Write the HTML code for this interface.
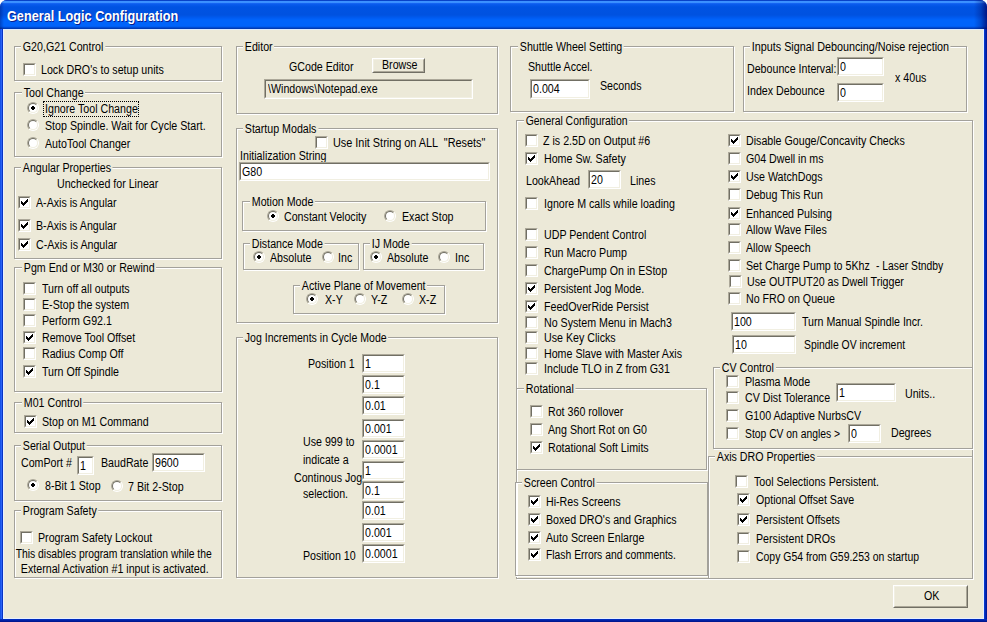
<!DOCTYPE html>
<html><head><meta charset="utf-8"><style>
html,body{margin:0;padding:0;width:987px;height:622px;overflow:hidden;background:#fff;}
#win{position:absolute;left:0;top:0;width:987px;height:622px;background:#0A3FD8;border-radius:7px 7px 0 0;overflow:hidden;}
#title{position:absolute;left:0;top:0;width:987px;height:29px;
background:linear-gradient(to bottom,#0842C8 0px,#0842C8 1px,#3D93FF 1px,#3A8EFF 3px,#1E6CF6 3px,#0A5CEE 4px,#0053E2 7px,#0052E0 15px,#005CF2 18px,#0064FB 20px,#0064FB 26px,#0058EA 27px,#0040BC 28px,#0034A8 29px);}
#ttxt{position:absolute;left:7px;top:8px;font-family:"Liberation Sans",sans-serif;font-weight:bold;font-size:14.5px;line-height:16px;color:#fff;text-shadow:1px 1px 0 #0A1E8C;white-space:nowrap;transform:scaleX(0.875);transform-origin:left top;}
#title::after{content:"";position:absolute;left:0;top:0;right:0;bottom:0;background:linear-gradient(to right,rgba(0,10,90,0.35) 0px,rgba(0,10,90,0) 4px,rgba(0,10,90,0) 974px,rgba(0,10,100,0.3) 981px,rgba(0,0,100,0.75) 987px);}
#lframe{position:absolute;left:0;top:29px;width:3px;height:593px;background:linear-gradient(to right,#1652E8 0px,#1652E8 1px,#2A62F4 1px,#2A62F4 2px,#0834C4 2px,#0834C4 3px);}
#rframe{position:absolute;left:984px;top:29px;width:3px;height:593px;background:linear-gradient(to right,#0840D8,#0020A8 2px,#001090 3px);}
#bframe{position:absolute;left:0;top:619px;width:987px;height:3px;background:linear-gradient(to bottom,#0030C8,#001C98 2px,#001488 3px);}
#client{position:absolute;left:3px;top:29px;width:979px;height:588px;background:#ECE9D8;border:1px solid #E8F0FF;border-top-color:#DCEBFF;}
.t{position:absolute;font-family:"Liberation Sans",sans-serif;font-size:12px;line-height:14px;color:#000;white-space:pre;transform:scaleX(0.888);transform-origin:left top;}
.t.a{transform:none;}
.t.a span{display:inline-block;transform:scaleX(0.888);}
.gl{background:#ECE9D8;padding:0 2px;}
.g{position:absolute;border:1px solid #A3A19B;box-shadow:inset 1px 1px 0 #fff,1px 1px 0 #fff;}
.cb{position:absolute;width:11px;height:11px;border:1px solid;border-color:#ACA899 #fff #fff #ACA899;}
.cbi{position:relative;width:9px;height:9px;border:1px solid;border-color:#716F64 #F1EFE2 #F1EFE2 #716F64;background:#fff;}
.rb{position:absolute;width:10px;height:10px;border:1px solid;border-color:#ACA899 #fff #fff #ACA899;border-radius:50%;}
.rbi{position:relative;width:8px;height:8px;border:1px solid;border-color:#716F64 #F1EFE2 #F1EFE2 #716F64;border-radius:50%;background:#fff;}
.dot{position:absolute;left:2px;top:2px;}
.tb{position:absolute;border:1px solid;border-color:#ACA899 #fff #fff #ACA899;background:#fff;}
.tbi{position:absolute;left:0;top:0;right:0;bottom:0;border:1px solid;border-color:#716F64 #F1EFE2 #F1EFE2 #716F64;}
.tb.dis{background:#ECE9D8;}
.btn{position:absolute;border:1px solid;border-color:#fff #716F64 #716F64 #fff;background:#ECE9D8;}
.btni{position:absolute;left:0;top:0;right:0;bottom:0;border:1px solid;border-color:#F1EFE2 #ACA899 #ACA899 #F1EFE2;}
.focus{position:absolute;border:1px dotted #000;}
</style></head><body>
<div id="win">
<div id="title"><div id="ttxt">General Logic Configuration</div></div>
<div id="lframe"></div><div id="rframe"></div><div id="bframe"></div>
<div id="client"></div>
<div class="g" style="left:14px;top:46px;width:206px;height:33px"></div>
<div class="t gl" style="left:21px;top:40px">G20,G21 Control</div>
<div class="cb" style="left:23px;top:63px"><div class="cbi"></div></div>
<div class="t" style="left:41px;top:63px">Lock DRO&#x27;s to setup units</div>
<div class="g" style="left:14px;top:92px;width:206px;height:63px"></div>
<div class="t gl" style="left:22px;top:86px">Tool Change</div>
<div class="rb" style="left:27px;top:102px"><div class="rbi"><svg class="dot" width="4" height="4" shape-rendering="crispEdges"><path d="M1 0h2v4h-2zM0 1h4v2h-4z" fill="#000"/></svg></div></div>
<div class="t" style="left:45px;top:102px">Ignore Tool Change</div>
<div class="focus" style="left:43px;top:101px;width:94px;height:14px"></div>
<div class="rb" style="left:27px;top:119px"><div class="rbi"></div></div>
<div class="t" style="left:45px;top:119px">Stop Spindle. Wait for Cycle Start.</div>
<div class="rb" style="left:27px;top:137px"><div class="rbi"></div></div>
<div class="t" style="left:45px;top:137px">AutoTool Changer</div>
<div class="g" style="left:14px;top:167px;width:206px;height:90px"></div>
<div class="t gl" style="left:21px;top:161px">Angular Properties</div>
<div class="t" style="left:57px;top:177px">Unchecked for Linear</div>
<div class="cb" style="left:18px;top:196px"><div class="cbi"><svg width="7" height="7" style="position:absolute;left:1px;top:1px" shape-rendering="crispEdges"><path d="M6 0h1v3h-1zM5 1h1v3h-1zM4 2h1v3h-1zM3 3h1v3h-1zM2 4h1v3h-1zM1 3h1v3h-1zM0 2h1v3h-1z" fill="#000"/></svg></div></div>
<div class="t" style="left:36px;top:196px">A-Axis is Angular</div>
<div class="cb" style="left:18px;top:219px"><div class="cbi"><svg width="7" height="7" style="position:absolute;left:1px;top:1px" shape-rendering="crispEdges"><path d="M6 0h1v3h-1zM5 1h1v3h-1zM4 2h1v3h-1zM3 3h1v3h-1zM2 4h1v3h-1zM1 3h1v3h-1zM0 2h1v3h-1z" fill="#000"/></svg></div></div>
<div class="t" style="left:36px;top:219px">B-Axis is Angular</div>
<div class="cb" style="left:18px;top:238px"><div class="cbi"><svg width="7" height="7" style="position:absolute;left:1px;top:1px" shape-rendering="crispEdges"><path d="M6 0h1v3h-1zM5 1h1v3h-1zM4 2h1v3h-1zM3 3h1v3h-1zM2 4h1v3h-1zM1 3h1v3h-1zM0 2h1v3h-1z" fill="#000"/></svg></div></div>
<div class="t" style="left:36px;top:238px">C-Axis is Angular</div>
<div class="g" style="left:14px;top:267px;width:206px;height:123px"></div>
<div class="t gl" style="left:22px;top:261px">Pgm End or M30 or Rewind</div>
<div class="cb" style="left:23px;top:282px"><div class="cbi"></div></div>
<div class="t" style="left:42px;top:282px">Turn off all outputs</div>
<div class="cb" style="left:23px;top:298px"><div class="cbi"></div></div>
<div class="t" style="left:42px;top:298px">E-Stop the system</div>
<div class="cb" style="left:23px;top:314px"><div class="cbi"></div></div>
<div class="t" style="left:42px;top:314px">Perform G92.1</div>
<div class="cb" style="left:23px;top:331px"><div class="cbi"><svg width="7" height="7" style="position:absolute;left:1px;top:1px" shape-rendering="crispEdges"><path d="M6 0h1v3h-1zM5 1h1v3h-1zM4 2h1v3h-1zM3 3h1v3h-1zM2 4h1v3h-1zM1 3h1v3h-1zM0 2h1v3h-1z" fill="#000"/></svg></div></div>
<div class="t" style="left:42px;top:331px">Remove Tool Offset</div>
<div class="cb" style="left:23px;top:347px"><div class="cbi"></div></div>
<div class="t" style="left:42px;top:347px">Radius Comp Off</div>
<div class="cb" style="left:23px;top:365px"><div class="cbi"><svg width="7" height="7" style="position:absolute;left:1px;top:1px" shape-rendering="crispEdges"><path d="M6 0h1v3h-1zM5 1h1v3h-1zM4 2h1v3h-1zM3 3h1v3h-1zM2 4h1v3h-1zM1 3h1v3h-1zM0 2h1v3h-1z" fill="#000"/></svg></div></div>
<div class="t" style="left:42px;top:365px">Turn Off Spindle</div>
<div class="g" style="left:14px;top:402px;width:206px;height:29px"></div>
<div class="t gl" style="left:22px;top:396px">M01 Control</div>
<div class="cb" style="left:24px;top:415px"><div class="cbi"><svg width="7" height="7" style="position:absolute;left:1px;top:1px" shape-rendering="crispEdges"><path d="M6 0h1v3h-1zM5 1h1v3h-1zM4 2h1v3h-1zM3 3h1v3h-1zM2 4h1v3h-1zM1 3h1v3h-1zM0 2h1v3h-1z" fill="#000"/></svg></div></div>
<div class="t" style="left:42px;top:415px">Stop on M1 Command</div>
<div class="g" style="left:14px;top:445px;width:206px;height:54px"></div>
<div class="t gl" style="left:21px;top:439px">Serial Output</div>
<div class="t" style="left:21px;top:456px">ComPort #</div>
<div class="tb" style="left:77px;top:456px;width:15px;height:17px"><div class="tbi"></div></div>
<div class="t" style="left:80px;top:459px">1</div>
<div class="t" style="left:101px;top:456px">BaudRate</div>
<div class="tb" style="left:152px;top:453px;width:51px;height:17px"><div class="tbi"></div></div>
<div class="t" style="left:155px;top:456px">9600</div>
<div class="rb" style="left:27px;top:479px"><div class="rbi"><svg class="dot" width="4" height="4" shape-rendering="crispEdges"><path d="M1 0h2v4h-2zM0 1h4v2h-4z" fill="#000"/></svg></div></div>
<div class="t" style="left:45px;top:479px">8-Bit 1 Stop</div>
<div class="rb" style="left:111px;top:480px"><div class="rbi"></div></div>
<div class="t" style="left:128px;top:480px">7 Bit 2-Stop</div>
<div class="g" style="left:14px;top:510px;width:206px;height:66px"></div>
<div class="t gl" style="left:21px;top:504px">Program Safety</div>
<div class="cb" style="left:20px;top:531px"><div class="cbi"></div></div>
<div class="t" style="left:38px;top:531px">Program Safety Lockout</div>
<div class="t a" style="left:-86.5px;width:400px;text-align:center;top:547px"><span style="transform-origin:center;transform:scaleX(0.862)">This disables program translation while the</span></div>
<div class="t a" style="left:-85.5px;width:400px;text-align:center;top:562px"><span style="transform-origin:center">External Activation #1 input is activated.</span></div>
<div class="g" style="left:236px;top:46px;width:260px;height:66px"></div>
<div class="t gl" style="left:243px;top:40px">Editor</div>
<div class="t" style="left:289px;top:60px">GCode Editor</div>
<div class="btn" style="left:372px;top:58px;width:51px;height:13px"><div class="btni"></div></div>
<div class="t" style="left:382px;top:58px">Browse</div>
<div class="tb dis" style="left:264px;top:79px;width:207px;height:18px"><div class="tbi"></div></div>
<div class="t" style="left:268px;top:82px">\Windows\Notepad.exe</div>
<div class="g" style="left:236px;top:128px;width:260px;height:193px"></div>
<div class="t gl" style="left:243px;top:122px">Startup Modals</div>
<div class="cb" style="left:315px;top:136px"><div class="cbi"></div></div>
<div class="t" style="left:333px;top:136px;transform:scaleX(0.9058)">Use Init String on ALL  &quot;Resets&quot;</div>
<div class="t" style="left:240px;top:149px">Initialization String</div>
<div class="tb" style="left:239px;top:162px;width:249px;height:17px"><div class="tbi"></div></div>
<div class="t" style="left:242px;top:165px">G80</div>
<div class="g" style="left:242px;top:201px;width:242px;height:28px"></div>
<div class="t gl" style="left:250px;top:195px">Motion Mode</div>
<div class="rb" style="left:267px;top:210px"><div class="rbi"><svg class="dot" width="4" height="4" shape-rendering="crispEdges"><path d="M1 0h2v4h-2zM0 1h4v2h-4z" fill="#000"/></svg></div></div>
<div class="t" style="left:284px;top:210px">Constant Velocity</div>
<div class="rb" style="left:384px;top:210px"><div class="rbi"></div></div>
<div class="t" style="left:402px;top:210px">Exact Stop</div>
<div class="g" style="left:243px;top:243px;width:114px;height:25px"></div>
<div class="t gl" style="left:250px;top:237px">Distance Mode</div>
<div class="rb" style="left:253px;top:251px"><div class="rbi"><svg class="dot" width="4" height="4" shape-rendering="crispEdges"><path d="M1 0h2v4h-2zM0 1h4v2h-4z" fill="#000"/></svg></div></div>
<div class="t" style="left:270px;top:251px">Absolute</div>
<div class="rb" style="left:322px;top:251px"><div class="rbi"></div></div>
<div class="t" style="left:338px;top:251px">Inc</div>
<div class="g" style="left:363px;top:243px;width:119px;height:25px"></div>
<div class="t gl" style="left:370px;top:237px">IJ Mode</div>
<div class="rb" style="left:370px;top:251px"><div class="rbi"><svg class="dot" width="4" height="4" shape-rendering="crispEdges"><path d="M1 0h2v4h-2zM0 1h4v2h-4z" fill="#000"/></svg></div></div>
<div class="t" style="left:387px;top:251px">Absolute</div>
<div class="rb" style="left:438px;top:251px"><div class="rbi"></div></div>
<div class="t" style="left:455px;top:251px">Inc</div>
<div class="g" style="left:293px;top:285px;width:150px;height:27px"></div>
<div class="t gl" style="left:300px;top:279px">Active Plane of Movement</div>
<div class="rb" style="left:306px;top:293px"><div class="rbi"><svg class="dot" width="4" height="4" shape-rendering="crispEdges"><path d="M1 0h2v4h-2zM0 1h4v2h-4z" fill="#000"/></svg></div></div>
<div class="t" style="left:325px;top:293px">X-Y</div>
<div class="rb" style="left:354px;top:293px"><div class="rbi"></div></div>
<div class="t" style="left:371px;top:293px">Y-Z</div>
<div class="rb" style="left:402px;top:293px"><div class="rbi"></div></div>
<div class="t" style="left:419px;top:293px">X-Z</div>
<div class="g" style="left:236px;top:337px;width:260px;height:239px"></div>
<div class="t gl" style="left:243px;top:331px;transform:scaleX(0.8791)">Jog Increments in Cycle Mode</div>
<div class="tb" style="left:362px;top:354px;width:41px;height:17px"><div class="tbi"></div></div>
<div class="t" style="left:365px;top:357px">1</div>
<div class="tb" style="left:362px;top:375px;width:41px;height:17px"><div class="tbi"></div></div>
<div class="t" style="left:365px;top:378px">0.1</div>
<div class="tb" style="left:362px;top:396px;width:41px;height:17px"><div class="tbi"></div></div>
<div class="t" style="left:365px;top:399px">0.01</div>
<div class="tb" style="left:362px;top:419px;width:41px;height:17px"><div class="tbi"></div></div>
<div class="t" style="left:365px;top:422px">0.001</div>
<div class="tb" style="left:362px;top:440px;width:41px;height:17px"><div class="tbi"></div></div>
<div class="t" style="left:365px;top:443px">0.0001</div>
<div class="tb" style="left:362px;top:461px;width:41px;height:17px"><div class="tbi"></div></div>
<div class="t" style="left:365px;top:464px">1</div>
<div class="tb" style="left:362px;top:481px;width:41px;height:17px"><div class="tbi"></div></div>
<div class="t" style="left:365px;top:484px">0.1</div>
<div class="tb" style="left:362px;top:501px;width:41px;height:17px"><div class="tbi"></div></div>
<div class="t" style="left:365px;top:504px">0.01</div>
<div class="tb" style="left:362px;top:523px;width:41px;height:17px"><div class="tbi"></div></div>
<div class="t" style="left:365px;top:526px">0.001</div>
<div class="tb" style="left:362px;top:544px;width:41px;height:17px"><div class="tbi"></div></div>
<div class="t" style="left:365px;top:547px">0.0001</div>
<div class="t a" style="left:-45px;width:400px;text-align:right;top:357px"><span style="transform-origin:right">Position 1</span></div>
<div class="t" style="left:303px;top:435px">Use 999 to</div>
<div class="t" style="left:303px;top:453px">indicate a</div>
<div class="t" style="left:294px;top:471px">Continous Jog</div>
<div class="t" style="left:303px;top:487px">selection.</div>
<div class="t" style="left:303px;top:549px">Position 10</div>
<div class="g" style="left:510px;top:46px;width:222px;height:64px"></div>
<div class="t gl" style="left:518px;top:40px">Shuttle Wheel Setting</div>
<div class="t" style="left:528px;top:60px">Shuttle Accel.</div>
<div class="tb" style="left:530px;top:79px;width:58px;height:18px"><div class="tbi"></div></div>
<div class="t" style="left:533px;top:82px">0.004</div>
<div class="t" style="left:600px;top:79px">Seconds</div>
<div class="g" style="left:743px;top:46px;width:222px;height:64px"></div>
<div class="t gl" style="left:750px;top:40px;transform:scaleX(0.8987)">Inputs Signal Debouncing/Noise rejection</div>
<div class="t" style="left:747px;top:62px">Debounce Interval:</div>
<div class="tb" style="left:837px;top:57px;width:45px;height:17px"><div class="tbi"></div></div>
<div class="t" style="left:840px;top:60px">0</div>
<div class="t" style="left:747px;top:84px">Index Debounce</div>
<div class="tb" style="left:837px;top:83px;width:45px;height:17px"><div class="tbi"></div></div>
<div class="t" style="left:840px;top:86px">0</div>
<div class="t" style="left:895px;top:71px">x 40us</div>
<div class="g" style="left:516px;top:120px;width:455px;height:457px"></div>
<div class="t gl" style="left:524px;top:114px;transform:scaleX(0.8667)">General Configuration</div>
<div class="cb" style="left:525px;top:134px"><div class="cbi"></div></div>
<div class="t" style="left:543px;top:134px">Z is 2.5D on Output #6</div>
<div class="cb" style="left:525px;top:152px"><div class="cbi"><svg width="7" height="7" style="position:absolute;left:1px;top:1px" shape-rendering="crispEdges"><path d="M6 0h1v3h-1zM5 1h1v3h-1zM4 2h1v3h-1zM3 3h1v3h-1zM2 4h1v3h-1zM1 3h1v3h-1zM0 2h1v3h-1z" fill="#000"/></svg></div></div>
<div class="t" style="left:544px;top:152px">Home Sw. Safety</div>
<div class="t" style="left:526px;top:174px">LookAhead</div>
<div class="tb" style="left:588px;top:170px;width:31px;height:17px"><div class="tbi"></div></div>
<div class="t" style="left:591px;top:173px">20</div>
<div class="t" style="left:630px;top:174px">Lines</div>
<div class="cb" style="left:525px;top:197px"><div class="cbi"></div></div>
<div class="t" style="left:544px;top:197px">Ignore M calls while loading</div>
<div class="cb" style="left:525px;top:228px"><div class="cbi"></div></div>
<div class="t" style="left:544px;top:228px">UDP Pendent Control</div>
<div class="cb" style="left:525px;top:246px"><div class="cbi"></div></div>
<div class="t" style="left:544px;top:246px">Run Macro Pump</div>
<div class="cb" style="left:525px;top:264px"><div class="cbi"></div></div>
<div class="t" style="left:544px;top:264px">ChargePump On in EStop</div>
<div class="cb" style="left:525px;top:282px"><div class="cbi"><svg width="7" height="7" style="position:absolute;left:1px;top:1px" shape-rendering="crispEdges"><path d="M6 0h1v3h-1zM5 1h1v3h-1zM4 2h1v3h-1zM3 3h1v3h-1zM2 4h1v3h-1zM1 3h1v3h-1zM0 2h1v3h-1z" fill="#000"/></svg></div></div>
<div class="t" style="left:544px;top:282px">Persistent Jog Mode.</div>
<div class="cb" style="left:525px;top:300px"><div class="cbi"><svg width="7" height="7" style="position:absolute;left:1px;top:1px" shape-rendering="crispEdges"><path d="M6 0h1v3h-1zM5 1h1v3h-1zM4 2h1v3h-1zM3 3h1v3h-1zM2 4h1v3h-1zM1 3h1v3h-1zM0 2h1v3h-1z" fill="#000"/></svg></div></div>
<div class="t" style="left:544px;top:300px">FeedOverRide Persist</div>
<div class="cb" style="left:525px;top:316px"><div class="cbi"></div></div>
<div class="t" style="left:544px;top:316px">No System Menu in Mach3</div>
<div class="cb" style="left:525px;top:331px"><div class="cbi"></div></div>
<div class="t" style="left:544px;top:331px">Use Key Clicks</div>
<div class="cb" style="left:525px;top:347px"><div class="cbi"></div></div>
<div class="t" style="left:544px;top:347px">Home Slave with Master Axis</div>
<div class="cb" style="left:525px;top:362px"><div class="cbi"></div></div>
<div class="t" style="left:544px;top:362px">Include TLO in Z from G31</div>
<div class="g" style="left:516px;top:388px;width:189px;height:80px"></div>
<div class="t gl" style="left:524px;top:382px">Rotational</div>
<div class="cb" style="left:530px;top:405px"><div class="cbi"></div></div>
<div class="t" style="left:548px;top:405px">Rot 360 rollover</div>
<div class="cb" style="left:530px;top:423px"><div class="cbi"></div></div>
<div class="t" style="left:548px;top:423px">Ang Short Rot on G0</div>
<div class="cb" style="left:530px;top:441px"><div class="cbi"><svg width="7" height="7" style="position:absolute;left:1px;top:1px" shape-rendering="crispEdges"><path d="M6 0h1v3h-1zM5 1h1v3h-1zM4 2h1v3h-1zM3 3h1v3h-1zM2 4h1v3h-1zM1 3h1v3h-1zM0 2h1v3h-1z" fill="#000"/></svg></div></div>
<div class="t" style="left:548px;top:441px">Rotational Soft Limits</div>
<div class="g" style="left:515px;top:482px;width:191px;height:92px"></div>
<div class="t gl" style="left:522px;top:476px">Screen Control</div>
<div class="cb" style="left:528px;top:495px"><div class="cbi"><svg width="7" height="7" style="position:absolute;left:1px;top:1px" shape-rendering="crispEdges"><path d="M6 0h1v3h-1zM5 1h1v3h-1zM4 2h1v3h-1zM3 3h1v3h-1zM2 4h1v3h-1zM1 3h1v3h-1zM0 2h1v3h-1z" fill="#000"/></svg></div></div>
<div class="t" style="left:546px;top:495px">Hi-Res Screens</div>
<div class="cb" style="left:528px;top:513px"><div class="cbi"><svg width="7" height="7" style="position:absolute;left:1px;top:1px" shape-rendering="crispEdges"><path d="M6 0h1v3h-1zM5 1h1v3h-1zM4 2h1v3h-1zM3 3h1v3h-1zM2 4h1v3h-1zM1 3h1v3h-1zM0 2h1v3h-1z" fill="#000"/></svg></div></div>
<div class="t" style="left:546px;top:513px">Boxed DRO&#x27;s and Graphics</div>
<div class="cb" style="left:528px;top:531px"><div class="cbi"><svg width="7" height="7" style="position:absolute;left:1px;top:1px" shape-rendering="crispEdges"><path d="M6 0h1v3h-1zM5 1h1v3h-1zM4 2h1v3h-1zM3 3h1v3h-1zM2 4h1v3h-1zM1 3h1v3h-1zM0 2h1v3h-1z" fill="#000"/></svg></div></div>
<div class="t" style="left:546px;top:531px">Auto Screen Enlarge</div>
<div class="cb" style="left:528px;top:548px"><div class="cbi"><svg width="7" height="7" style="position:absolute;left:1px;top:1px" shape-rendering="crispEdges"><path d="M6 0h1v3h-1zM5 1h1v3h-1zM4 2h1v3h-1zM3 3h1v3h-1zM2 4h1v3h-1zM1 3h1v3h-1zM0 2h1v3h-1z" fill="#000"/></svg></div></div>
<div class="t" style="left:546px;top:548px;transform:scaleX(0.8614)">Flash Errors and comments.</div>
<div class="cb" style="left:728px;top:134px"><div class="cbi"><svg width="7" height="7" style="position:absolute;left:1px;top:1px" shape-rendering="crispEdges"><path d="M6 0h1v3h-1zM5 1h1v3h-1zM4 2h1v3h-1zM3 3h1v3h-1zM2 4h1v3h-1zM1 3h1v3h-1zM0 2h1v3h-1z" fill="#000"/></svg></div></div>
<div class="t" style="left:746px;top:134px">Disable Gouge/Concavity Checks</div>
<div class="cb" style="left:728px;top:152px"><div class="cbi"></div></div>
<div class="t" style="left:746px;top:152px">G04 Dwell in ms</div>
<div class="cb" style="left:728px;top:170px"><div class="cbi"><svg width="7" height="7" style="position:absolute;left:1px;top:1px" shape-rendering="crispEdges"><path d="M6 0h1v3h-1zM5 1h1v3h-1zM4 2h1v3h-1zM3 3h1v3h-1zM2 4h1v3h-1zM1 3h1v3h-1zM0 2h1v3h-1z" fill="#000"/></svg></div></div>
<div class="t" style="left:746px;top:170px">Use WatchDogs</div>
<div class="cb" style="left:728px;top:188px"><div class="cbi"></div></div>
<div class="t" style="left:746px;top:188px">Debug This Run</div>
<div class="cb" style="left:728px;top:207px"><div class="cbi"><svg width="7" height="7" style="position:absolute;left:1px;top:1px" shape-rendering="crispEdges"><path d="M6 0h1v3h-1zM5 1h1v3h-1zM4 2h1v3h-1zM3 3h1v3h-1zM2 4h1v3h-1zM1 3h1v3h-1zM0 2h1v3h-1z" fill="#000"/></svg></div></div>
<div class="t" style="left:746px;top:207px">Enhanced Pulsing</div>
<div class="cb" style="left:728px;top:223px"><div class="cbi"></div></div>
<div class="t" style="left:746px;top:223px">Allow Wave Files</div>
<div class="cb" style="left:728px;top:241px"><div class="cbi"></div></div>
<div class="t" style="left:746px;top:241px">Allow Speech</div>
<div class="cb" style="left:728px;top:259px"><div class="cbi"></div></div>
<div class="t" style="left:746px;top:259px">Set Charge Pump to 5Khz</div>
<div class="t" style="left:876px;top:259px;transform:scaleX(0.8614)">- Laser Stndby</div>
<div class="cb" style="left:729px;top:275px"><div class="cbi"></div></div>
<div class="t" style="left:747px;top:275px">Use OUTPUT20 as Dwell Trigger</div>
<div class="cb" style="left:728px;top:292px"><div class="cbi"></div></div>
<div class="t" style="left:746px;top:292px">No FRO on Queue</div>
<div class="tb" style="left:731px;top:312px;width:63px;height:17px"><div class="tbi"></div></div>
<div class="t" style="left:734px;top:315px">100</div>
<div class="t" style="left:802px;top:315px">Turn Manual Spindle Incr.</div>
<div class="tb" style="left:732px;top:335px;width:62px;height:17px"><div class="tbi"></div></div>
<div class="t" style="left:735px;top:338px">10</div>
<div class="t" style="left:804px;top:338px;transform:scaleX(0.8658)">Spindle OV increment</div>
<div class="g" style="left:713px;top:367px;width:258px;height:80px"></div>
<div class="t gl" style="left:720px;top:361px">CV Control</div>
<div class="cb" style="left:726px;top:375px"><div class="cbi"></div></div>
<div class="t" style="left:745px;top:375px">Plasma Mode</div>
<div class="cb" style="left:726px;top:391px"><div class="cbi"></div></div>
<div class="t" style="left:745px;top:391px">CV Dist Tolerance</div>
<div class="tb" style="left:836px;top:383px;width:58px;height:17px"><div class="tbi"></div></div>
<div class="t" style="left:839px;top:386px">1</div>
<div class="t" style="left:905px;top:387px">Units..</div>
<div class="cb" style="left:726px;top:409px"><div class="cbi"></div></div>
<div class="t" style="left:745px;top:409px">G100 Adaptive NurbsCV</div>
<div class="cb" style="left:726px;top:427px"><div class="cbi"></div></div>
<div class="t" style="left:745px;top:427px;transform:scaleX(0.8614)">Stop CV on angles &gt;</div>
<div class="tb" style="left:848px;top:424px;width:31px;height:17px"><div class="tbi"></div></div>
<div class="t" style="left:851px;top:427px">0</div>
<div class="t" style="left:891px;top:426px">Degrees</div>
<div class="g" style="left:708px;top:456px;width:263px;height:121px"></div>
<div class="t gl" style="left:715px;top:450px">Axis DRO Properties</div>
<div class="cb" style="left:735px;top:475px"><div class="cbi"></div></div>
<div class="t" style="left:754px;top:475px">Tool Selections Persistent.</div>
<div class="cb" style="left:737px;top:493px"><div class="cbi"><svg width="7" height="7" style="position:absolute;left:1px;top:1px" shape-rendering="crispEdges"><path d="M6 0h1v3h-1zM5 1h1v3h-1zM4 2h1v3h-1zM3 3h1v3h-1zM2 4h1v3h-1zM1 3h1v3h-1zM0 2h1v3h-1z" fill="#000"/></svg></div></div>
<div class="t" style="left:756px;top:493px">Optional Offset Save</div>
<div class="cb" style="left:737px;top:513px"><div class="cbi"><svg width="7" height="7" style="position:absolute;left:1px;top:1px" shape-rendering="crispEdges"><path d="M6 0h1v3h-1zM5 1h1v3h-1zM4 2h1v3h-1zM3 3h1v3h-1zM2 4h1v3h-1zM1 3h1v3h-1zM0 2h1v3h-1z" fill="#000"/></svg></div></div>
<div class="t" style="left:756px;top:513px">Persistent Offsets</div>
<div class="cb" style="left:737px;top:532px"><div class="cbi"></div></div>
<div class="t" style="left:756px;top:532px">Persistent DROs</div>
<div class="cb" style="left:737px;top:550px"><div class="cbi"></div></div>
<div class="t" style="left:756px;top:550px;transform:scaleX(0.8702)">Copy G54 from G59.253 on startup</div>
<div class="btn" style="left:893px;top:585px;width:73px;height:21px"><div class="btni"></div></div>
<div class="t" style="left:924px;top:589px">OK</div>
</div>
</body></html>
